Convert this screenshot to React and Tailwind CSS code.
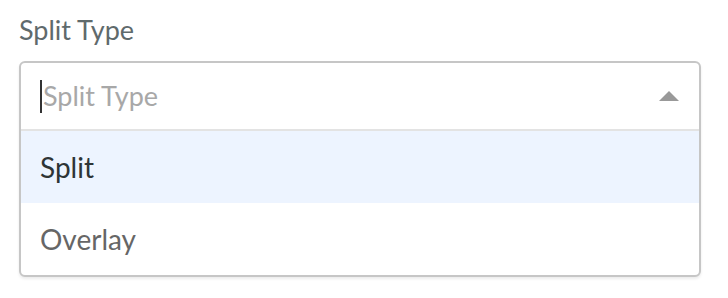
export default function App() {
  return (
    <div className="min-h-screen bg-white pl-[19px] pr-[27px] pt-[14px] font-['Lato',sans-serif]">
      <label className="block text-[27px] leading-[32px] text-[#5f6a6c]">Split Type</label>
      <div className="mt-[15px] rounded-[6px] border-2 border-[#c6c6c6] bg-white shadow-[0_2px_3px_rgba(0,0,0,0.08)] overflow-hidden">
        <div className="flex h-[68px] items-center border-b-2 border-[#e3e3e3] pl-[19px] pr-[20px]">
          <span className="h-[33px] w-[2px] bg-[#333]" />
          <span className="ml-[1px] flex-1 text-[27px] text-[#a8a8a8]">Split Type</span>
          <svg width="20" height="10" viewBox="0 0 20 10">
            <path d="M10 0 L20 10 L0 10 Z" fill="#999" />
          </svg>
        </div>
        <div className="flex h-[72px] items-center bg-[#edf4ff] px-[19px] text-[28px] text-[#2e3436]">Split</div>
        <div className="flex h-[72px] items-center px-[19px] text-[28px] text-[#666]">Overlay</div>
      </div>
    </div>
  );
}
